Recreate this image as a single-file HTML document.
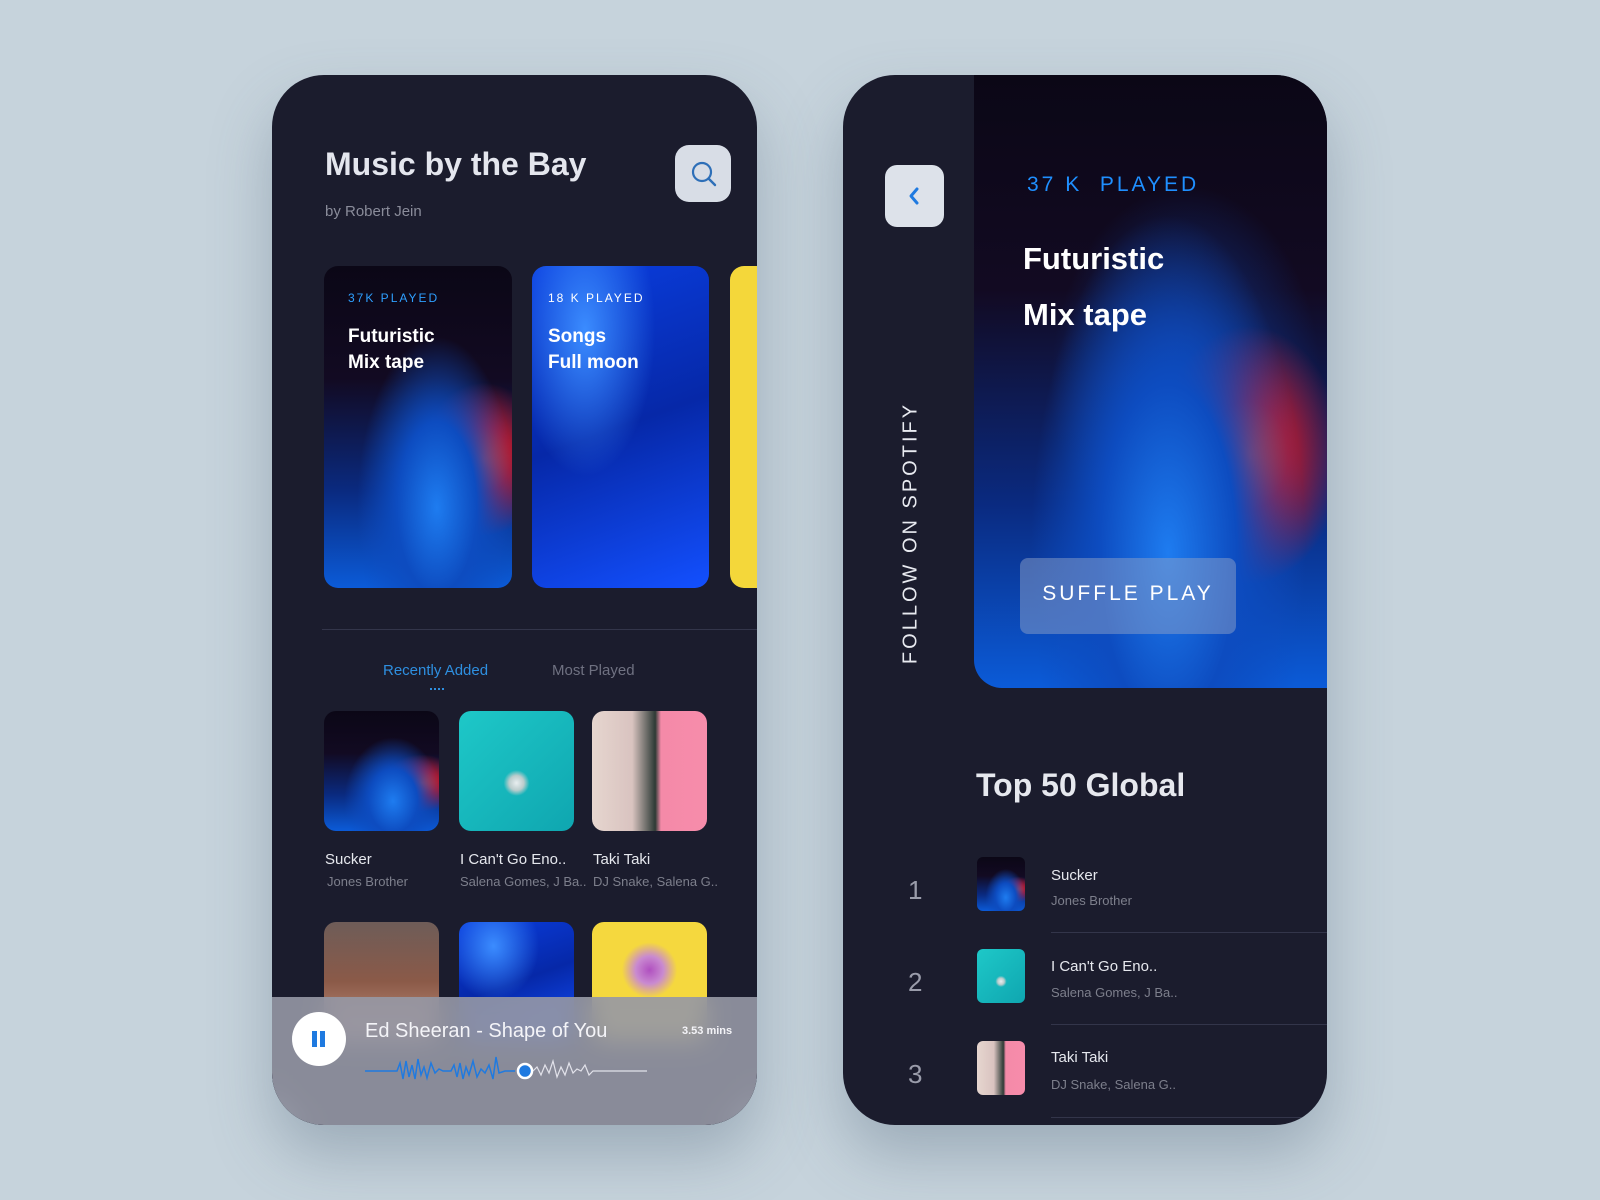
<!DOCTYPE html>
<html><head><meta charset="utf-8"><style>
*{margin:0;padding:0;box-sizing:border-box}
body{width:1600px;height:1200px;background:#c6d3dc;font-family:"Liberation Sans",sans-serif;position:relative;overflow:hidden}
.ph{position:absolute;background:#1b1c2d;border-radius:52px;overflow:hidden;box-shadow:0 30px 60px rgba(80,100,120,.35)}
.a{position:absolute}
.t{position:absolute;white-space:nowrap}
.vr{background:radial-gradient(ellipse at 60% 75%,#1e7cf0 0,#0d4cc0 25%,transparent 50%),radial-gradient(ellipse at 85% 60%,#ff3a1a 0,#b01a30 12%,transparent 28%),linear-gradient(180deg,#0b0716 0,#120a22 35%,#0a2a80 70%,#0b5bd8 100%)}
.vr2{background:radial-gradient(ellipse at 55% 78%,#1e7cf0 0,#0d4cc0 25%,transparent 50%),radial-gradient(ellipse at 78% 62%,#ff3a1a 0,#b01a30 10%,transparent 24%),radial-gradient(ellipse at 60% 50%,#0e3a9a 0,transparent 45%),linear-gradient(180deg,#0b0716 0,#120a22 35%,#0a2a80 70%,#0b5bd8 100%)}
.bl{background:radial-gradient(ellipse at 30% 20%,#3b8cff 0,transparent 40%),linear-gradient(160deg,#0a3ee0,#0628a8 50%,#1350ff)}
.tq{background:radial-gradient(circle at 50% 60%,#e8eef0 0,#bcc 8%,transparent 14%),linear-gradient(135deg,#1ec8c8,#0fa6b0)}
.pk{background:linear-gradient(90deg,#e6d6cf 0,#d9c3c0 35%,#2d3a35 55%,#f48aa8 60%,#f78cab)}
</style></head><body>

<div class="ph" style="left:272px;top:75px;width:485px;height:1050px">
 <div class="t" style="left:53px;top:71px;font-size:32px;font-weight:bold;color:#e4e6ee">Music by the Bay</div>
 <div class="t" style="left:53px;top:128px;font-size:15px;color:#8a8c9a">by Robert Jein</div>
 <div class="a" style="left:403px;top:70px;width:56px;height:57px;border-radius:14px;background:#d8dde6">
  <svg width="56" height="57" viewBox="0 0 56 57"><circle cx="27" cy="27" r="9" fill="none" stroke="#2e6fb8" stroke-width="2.2"/><line x1="33.5" y1="33.5" x2="40" y2="40" stroke="#2e6fb8" stroke-width="2.4" stroke-linecap="round"/></svg></div>
 <div class="a vr" style="left:52px;top:191px;width:188px;height:322px;border-radius:14px"></div>
 <div class="t" style="left:76px;top:216px;font-size:12px;letter-spacing:2px;color:#2ea0ff">37K PLAYED</div>
 <div class="t" style="left:76px;top:249px;font-size:19px;font-weight:bold;color:#fff;line-height:26px">Futuristic<br>Mix tape</div>
 <div class="a bl" style="left:260px;top:191px;width:177px;height:322px;border-radius:14px"></div>
 <div class="t" style="left:276px;top:216px;font-size:12px;letter-spacing:2px;color:#fff">18 K PLAYED</div>
 <div class="t" style="left:276px;top:249px;font-size:19px;font-weight:bold;color:#fff;line-height:26px">Songs<br>Full moon</div>
 <div class="a" style="left:458px;top:191px;width:40px;height:322px;border-radius:14px;background:#f4d73a"></div>
 <div class="a" style="left:50px;top:554px;width:440px;height:1px;background:#33354a"></div>
 <div class="t" style="left:111px;top:587px;font-size:15px;color:#2e8fe0">Recently Added</div>
 <div class="a" style="left:158px;top:613px;width:14px;height:2px;border-top:2px dotted #2e8fe0"></div>
 <div class="t" style="left:280px;top:587px;font-size:15px;color:#6f7181">Most Played</div>
 <div class="a vr" style="left:52px;top:636px;width:115px;height:120px;border-radius:12px"></div>
 <div class="a tq" style="left:187px;top:636px;width:115px;height:120px;border-radius:12px"></div>
 <div class="a pk" style="left:320px;top:636px;width:115px;height:120px;border-radius:12px"></div>
 <div class="t" style="left:53px;top:776px;font-size:15px;color:#e6e8ee">Sucker</div>
 <div class="t" style="left:55px;top:799px;font-size:13px;color:#7d7f8c">Jones Brother</div>
 <div class="t" style="left:188px;top:776px;font-size:15px;color:#e6e8ee">I Can't Go Eno..</div>
 <div class="t" style="left:188px;top:799px;font-size:13px;color:#7d7f8c">Salena Gomes, J Ba..</div>
 <div class="t" style="left:321px;top:776px;font-size:15px;color:#e6e8ee">Taki Taki</div>
 <div class="t" style="left:321px;top:799px;font-size:13px;color:#7d7f8c">DJ Snake, Salena G..</div>
 <div class="a" style="left:52px;top:847px;width:115px;height:120px;border-radius:12px;background:linear-gradient(180deg,#6e5c58,#8b5a48 50%,#c99a88)"></div>
 <div class="a bl" style="left:187px;top:847px;width:115px;height:120px;border-radius:12px"></div>
 <div class="a" style="left:320px;top:847px;width:115px;height:120px;border-radius:12px;background:radial-gradient(circle at 50% 40%,#b050c0 0,#c98ad0 15%,transparent 30%),#f5d83e"></div>
 <div class="a" style="left:0;top:922px;width:485px;height:128px;background:rgba(150,152,165,.9);backdrop-filter:blur(12px);-webkit-backdrop-filter:blur(12px)"></div>
 <div class="a" style="left:20px;top:937px;width:54px;height:54px;border-radius:50%;background:#fff"></div>
 <div class="a" style="left:40px;top:956px;width:5px;height:16px;background:#1f7ae0"></div>
 <div class="a" style="left:48px;top:956px;width:5px;height:16px;background:#1f7ae0"></div>
 <div class="t" style="left:93px;top:945px;font-size:20px;color:#f4f4f8">Ed Sheeran - Shape of You</div>
 <div class="t" style="left:410px;top:950px;font-size:11px;font-weight:bold;color:#f4f4f8">3.53 mins</div>
 <svg class="a" style="left:93px;top:976px" width="290" height="40" viewBox="0 0 290 40">
  <polyline fill="none" stroke="#1f7ae0" stroke-width="1.5" points="0,20 32,20 35,12 38,28 41,10 44,26 47,14 50,28 53,8 56,24 59,16 62,27 66,12 70,22 74,18 78,20 86,20 89,14 92,26 95,12 98,28 101,16 104,24 108,10 112,26 116,18 120,22 124,14 128,28 131,6 134,22 140,20 150,20"/>
  <polyline fill="none" stroke="#e2e2ea" stroke-width="1.2" points="168,20 172,16 176,24 180,14 184,22 188,10 192,26 196,16 200,24 204,12 208,22 212,18 216,20 220,14 224,24 228,20 240,20 282,20"/>
  <circle cx="160" cy="20" r="7" fill="#1f7ae0" stroke="#fff" stroke-width="2.5"/>
 </svg>
</div>

<div class="ph" style="left:843px;top:75px;width:484px;height:1050px">
 <div class="a vr2" style="left:131px;top:0;width:353px;height:613px;border-bottom-left-radius:28px"></div>
 <div class="a" style="left:42px;top:90px;width:59px;height:62px;border-radius:12px;background:#dde2ea">
  <svg width="59" height="62" viewBox="0 0 59 62"><polyline points="32,24 26,31 32,38" fill="none" stroke="#1f7ae0" stroke-width="3" stroke-linecap="round" stroke-linejoin="round"/></svg></div>
 <div class="t" style="left:184px;top:98px;font-size:21px;letter-spacing:3px;color:#1f8fff">37 K &nbsp;PLAYED</div>
 <div class="t" style="left:180px;top:156px;font-size:31px;font-weight:bold;color:#fff;line-height:56px">Futuristic<br>Mix tape</div>
 <div class="a" style="left:177px;top:483px;width:216px;height:76px;border-radius:8px;background:rgba(140,160,200,.5)"></div>
 <div class="t" style="left:177px;top:507px;width:216px;text-align:center;font-size:21px;letter-spacing:3px;color:#fff">SUFFLE PLAY</div>
 <div class="t" style="left:68px;top:458px;transform:translate(-50%,-50%) rotate(-90deg);font-size:20px;letter-spacing:3px;color:#e8eaf0">FOLLOW ON SPOTIFY</div>
 <div class="t" style="left:133px;top:692px;font-size:32px;font-weight:bold;color:#e6e8ee">Top 50 Global</div>
 <div class="t" style="left:65px;top:800px;font-size:26px;color:#9a9caa">1</div>
 <div class="t" style="left:65px;top:892px;font-size:26px;color:#9a9caa">2</div>
 <div class="t" style="left:65px;top:984px;font-size:26px;color:#9a9caa">3</div>
 <div class="a vr" style="left:134px;top:782px;width:48px;height:54px;border-radius:6px"></div>
 <div class="a tq" style="left:134px;top:874px;width:48px;height:54px;border-radius:6px"></div>
 <div class="a pk" style="left:134px;top:966px;width:48px;height:54px;border-radius:6px"></div>
 <div class="t" style="left:208px;top:792px;font-size:15px;color:#e6e8ee">Sucker</div>
 <div class="t" style="left:208px;top:818px;font-size:13px;color:#7d7f8c">Jones Brother</div>
 <div class="t" style="left:208px;top:883px;font-size:15px;color:#e6e8ee">I Can't Go Eno..</div>
 <div class="t" style="left:208px;top:910px;font-size:13px;color:#7d7f8c">Salena Gomes, J Ba..</div>
 <div class="t" style="left:208px;top:974px;font-size:15px;color:#e6e8ee">Taki Taki</div>
 <div class="t" style="left:208px;top:1002px;font-size:13px;color:#7d7f8c">DJ Snake, Salena G..</div>
 <div class="a" style="left:208px;top:857px;width:276px;height:1px;background:#33354a"></div>
 <div class="a" style="left:208px;top:949px;width:276px;height:1px;background:#33354a"></div>
 <div class="a" style="left:208px;top:1042px;width:276px;height:1px;background:#33354a"></div>
</div>
</body></html>
